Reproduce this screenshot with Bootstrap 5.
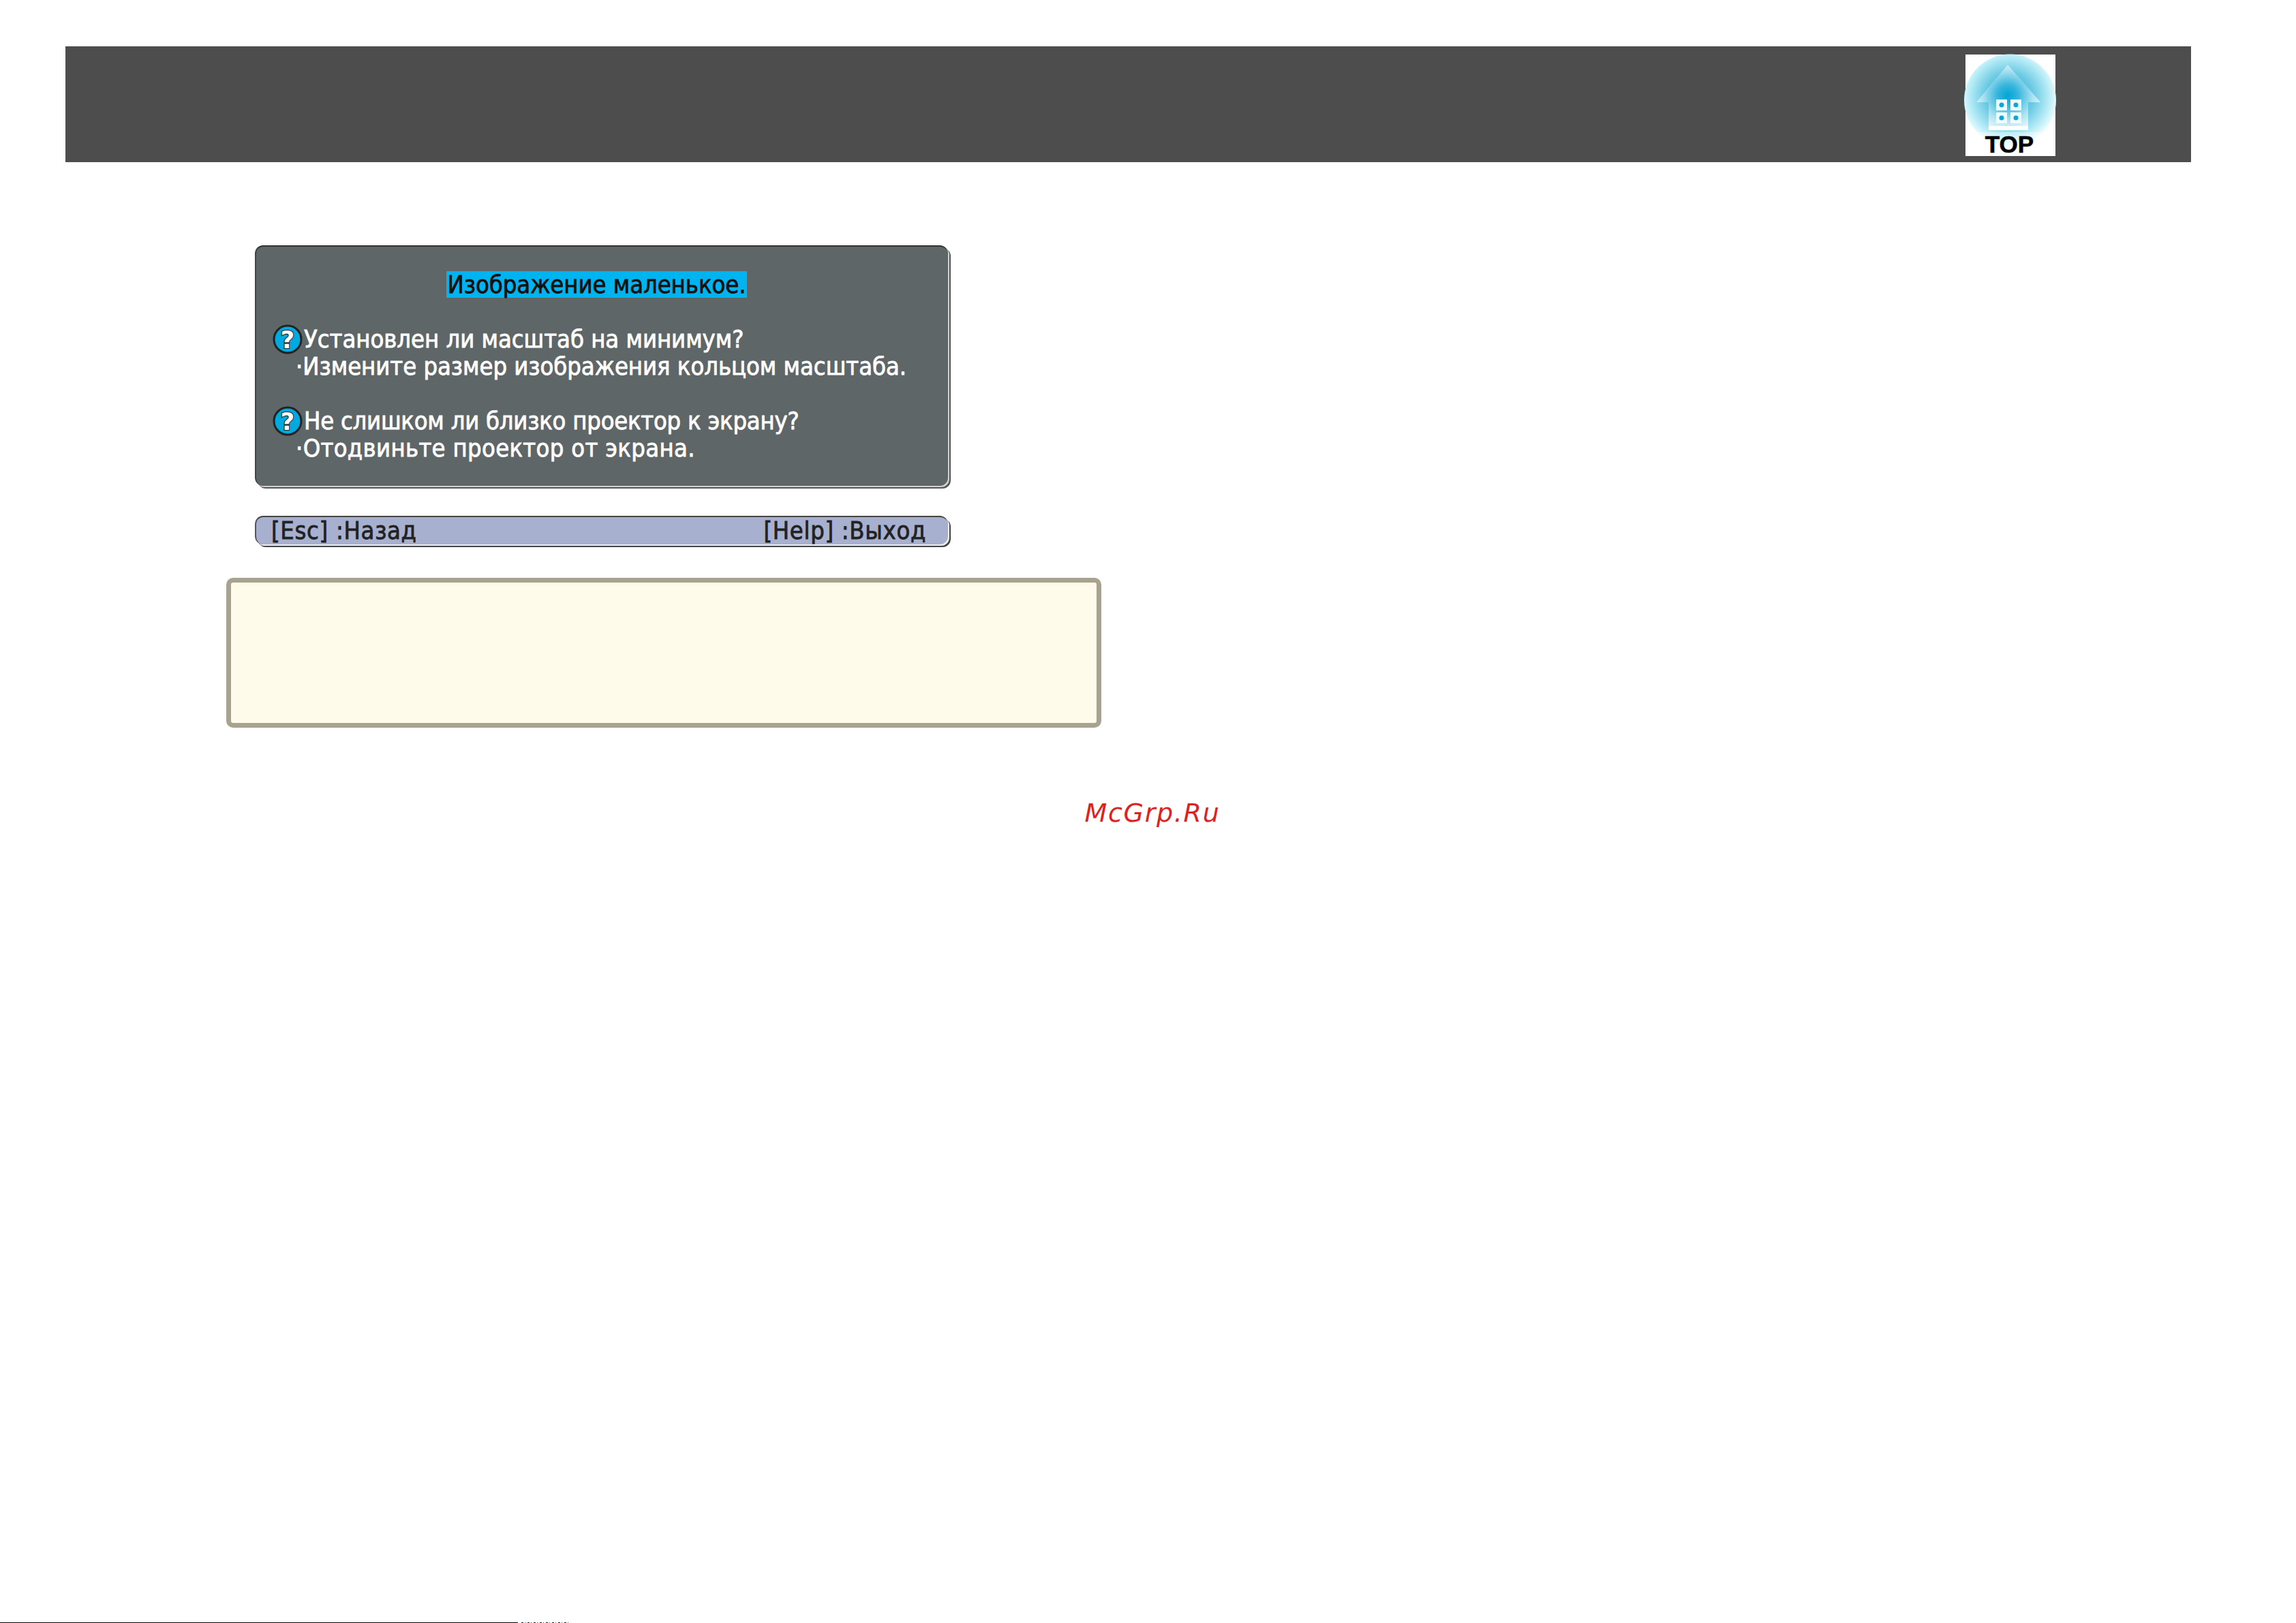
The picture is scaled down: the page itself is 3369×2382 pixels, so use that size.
<!DOCTYPE html>
<html lang="ru">
<head>
<meta charset="utf-8">
<title>Изображение маленькое</title>
<link href="https://cdn.jsdelivr.net/npm/bootstrap@5.3.0/dist/css/bootstrap.min.css" rel="stylesheet">
<style>
html,body{margin:0;background:#fff}
.page-wrap{height:2382px;overflow:hidden;display:flex;flex-direction:column}
.top-band{margin:68px 154px 0 96px;height:170px;background:#4d4d4d;padding:12px 197px 0 0}
.top-link{display:block;width:136px;height:149px;line-height:0}
.osd-area{padding:122px 0 0 374px;width:1400px;font-family:"DejaVu Sans Condensed","DejaVu Sans",sans-serif;font-size:36px;-webkit-text-stroke:.8px currentColor}
.osd-box{width:1017px;height:353px;background:#5f6668;color:#fff;border-top:2px solid #333;border-left:2px solid #444;border-radius:12px;box-shadow:2px 2px 0 #d0d0d0,4px 4px 0 #555;padding:36px 0 0 24px}
.osd-title{padding-right:40px;line-height:39px;height:39px;text-align:center;margin-bottom:40px}
.osd-title span{display:inline-block;background:#00b4f0;color:#111;padding:0 2px}
.osd-row{display:flex;align-items:center;height:41px}
.osd-row svg{flex:0 0 auto;width:44px;height:44px;margin-right:2px;overflow:visible}
.osd-sub{padding-left:34px;height:41px;line-height:41px;margin-bottom:39px;margin-top:-1px}
.track-tight{letter-spacing:-.2px}
.track-wide{letter-spacing:.35px}
.osd-bar{width:1017px;height:42px;margin-top:44px;background:#a8b0d0;color:#222;border-top:2px solid #444;border-left:2px solid #555;border-radius:12px;box-shadow:2px 2px 0 #eee,4px 4px 0 #444;padding:0 32px 0 22px;line-height:40px;letter-spacing:.7px}
.note-box{margin-left:332px;width:1284px;height:220px;margin-top:49px;background:#fffbea;border:7px solid #a8a391;border-radius:10px}
.wm-text{margin-top:102px;padding-left:13px;text-align:center;font-family:"DejaVu Sans",sans-serif;font-style:italic;font-size:38px;line-height:46px;letter-spacing:1.7px;color:#dd2222}
.foot-wrap{margin-top:auto}
.foot-line{height:1px;width:760px;background:#000;position:relative}
.foot-noise{position:absolute;left:765px;top:0;width:72px;height:1px;background:repeating-linear-gradient(90deg,#222 0 3px,#fff 3px 5px,#258 5px 6px,#fff 6px 9px)}
</style>
</head>
<body>
<div class="page-wrap">
  <div class="top-band d-flex justify-content-end">
    <a class="top-link" href="#" aria-label="TOP">
      <svg width="136" height="149" viewBox="0 0 136 149" style="overflow:visible">
        <defs>
          <radialGradient id="ringFill" cx="66" cy="62" r="72" gradientUnits="userSpaceOnUse">
            <stop offset="0" stop-color="#1cacd6"/><stop offset=".5" stop-color="#6ccae3"/><stop offset=".8" stop-color="#b4ebf6"/><stop offset="1" stop-color="#effdff"/>
          </radialGradient>
          <radialGradient id="houseFill" cx="64" cy="60" r="60" gradientUnits="userSpaceOnUse">
            <stop offset="0" stop-color="#00a5d6"/><stop offset=".25" stop-color="#35b5dc"/><stop offset=".62" stop-color="#aee3f1"/><stop offset="1" stop-color="#ffffff"/>
          </radialGradient>
          <filter id="softEdge"><feGaussianBlur stdDeviation=".7"/></filter>
        </defs>
        <rect x="2" y="0" width="132" height="149" fill="#fff"/>
        <circle cx="67.500" cy="67" r="67.500" fill="url(#ringFill)"/>
        <g filter="url(#softEdge)">
          <path d="M64 15 112 70H94V107H36V70H18Z" fill="url(#houseFill)"/>
          <g fill="#eefafd">
            <rect x="47" y="66" width="16" height="16"/><rect x="68" y="66" width="16" height="16"/>
            <rect x="47" y="85" width="16" height="16"/><rect x="68" y="85" width="16" height="16"/>
          </g>
          <g fill="#0ca6d6">
            <circle cx="55" cy="74" r="3.500"/><circle cx="76" cy="74" r="3.500"/>
            <circle cx="55" cy="93" r="3.500"/><circle cx="76" cy="93" r="3.500"/>
          </g>
          <path d="M36 105H94V111H36Z" fill="#fff"/>
        </g>
        <rect x="2" y="114" width="132" height="35" fill="#fff" opacity=".35"/>
        <text x="66.500" y="144" text-anchor="middle" font-family="Liberation Sans, Arial, sans-serif" font-weight="700" font-size="35" fill="#000" stroke="#000" stroke-width=".6">TOP</text>
      </svg>
    </a>
  </div>

  <div class="osd-area">
    <div class="osd-box">
      <div class="osd-title"><span>Изображение маленькое.</span></div>
      <div class="osd-row">
        <svg viewBox="0 0 44 44"><circle cx="22" cy="22" r="20" fill="#00a9e0" stroke="#222" stroke-width="3"/><text x="22" y="35" text-anchor="middle" font-family="DejaVu Sans, sans-serif" font-weight="700" font-size="36" fill="#fff" stroke="#222" stroke-width="2.200" paint-order="stroke">?</text></svg>
        <span>Установлен ли масштаб на минимум?</span>
      </div>
      <div class="osd-sub">·Измените размер изображения кольцом масштаба.</div>
      <div class="osd-row">
        <svg viewBox="0 0 44 44"><circle cx="22" cy="22" r="20" fill="#00a9e0" stroke="#222" stroke-width="3"/><text x="22" y="35" text-anchor="middle" font-family="DejaVu Sans, sans-serif" font-weight="700" font-size="36" fill="#fff" stroke="#222" stroke-width="2.200" paint-order="stroke">?</text></svg>
        <span class="track-tight">Не слишком ли близко проектор к экрану?</span>
      </div>
      <div class="osd-sub track-wide">·Отодвиньте проектор от экрана.</div>
    </div>
    <div class="osd-bar d-flex justify-content-between">
      <span>[Esc] :Назад</span><span>[Help] :Выход</span>
    </div>
  </div>

  <div class="note-box"></div>
  <div class="wm-text">McGrp.Ru</div>

  <div class="foot-wrap"><div class="foot-line"><div class="foot-noise"></div></div></div>
</div>
<script src="https://cdn.jsdelivr.net/npm/bootstrap@5.3.0/dist/js/bootstrap.bundle.min.js"></script>
</body>
</html>
